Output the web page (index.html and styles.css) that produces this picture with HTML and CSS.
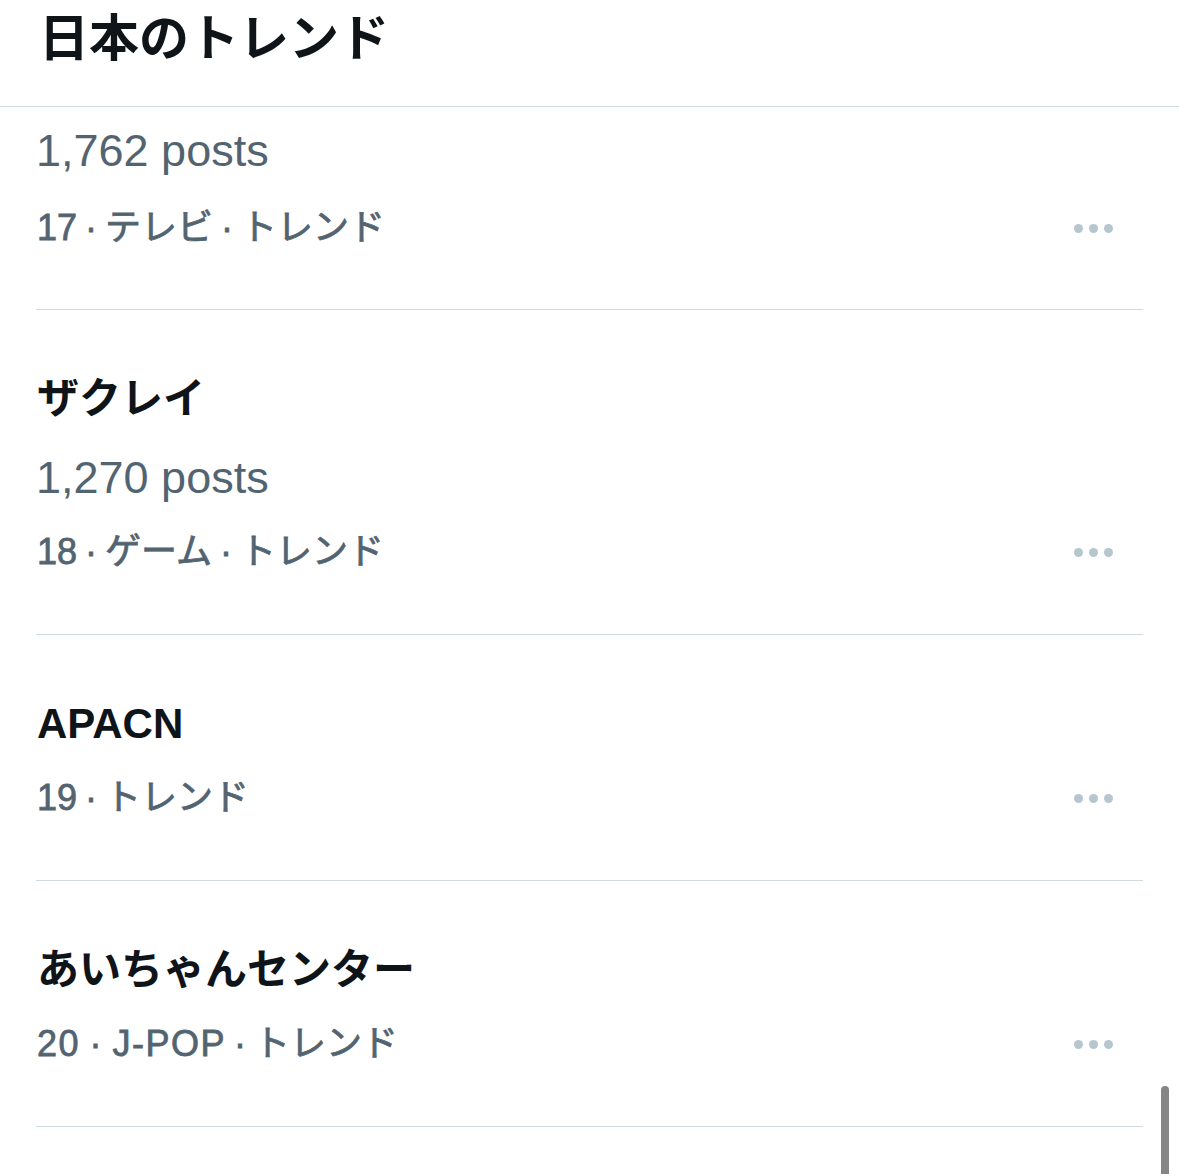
FILE: index.html
```html
<!DOCTYPE html>
<html lang="ja">
<head>
    <meta charset="UTF-8">
    <meta name="viewport" content="width=device-width, initial-scale=1.0">
    <title>日本のトレンド</title>
    <link rel="stylesheet" href="styles.css">
</head>
<body>
    <header class="page-header">
        <h1>日本のトレンド</h1>
    </header>

    <main>
        <ul class="trends">
            <li class="trend trend-cut">
                <div class="trend-posts">1,762 posts</div>
                <div class="trend-meta">
                    <span>17 · テレビ · トレンド</span>
                    <span class="more"><i></i><i></i><i></i></span>
                </div>
            </li>
            <li class="trend">
                <div class="trend-title">ザクレイ</div>
                <div class="trend-posts">1,270 posts</div>
                <div class="trend-meta">
                    <span>18 · ゲーム · トレンド</span>
                    <span class="more"><i></i><i></i><i></i></span>
                </div>
            </li>
            <li class="trend">
                <div class="trend-title">APACN</div>
                <div class="trend-meta">
                    <span>19 · トレンド</span>
                    <span class="more"><i></i><i></i><i></i></span>
                </div>
            </li>
            <li class="trend">
                <div class="trend-title">あいちゃんセンター</div>
                <div class="trend-meta">
                    <span><span class="latin">20 · J-POP</span> · トレンド</span>
                    <span class="more"><i></i><i></i><i></i></span>
                </div>
            </li>
        </ul>
    </main>

    <div class="scrollbar"></div>
</body>
</html>
```

FILE: styles.css
```css
/* base */
body {
    margin: 0;
    background: #fff;
    font-family: "Liberation Sans", "Noto Sans CJK JP", sans-serif;
    color: #0f1419;
    overflow: hidden;
}

/* header */
.page-header {
    height: 107px;
    border-bottom: 1px solid #d4dce0;
    padding: 0 39px;
    box-sizing: border-box;
}

.page-header h1 {
    margin: 0;
    font-size: 50px;
    line-height: 78px;
    font-weight: 700;
}

/* trend list */
.trends {
    list-style: none;
    margin: 0 36px;
    padding: 0;
}

.trend {
    padding: 59px 0 52px;
    border-bottom: 1px solid #cfd9de;
}

.trend-cut {
    padding: 14px 0 51px;
}

.trend-title {
    font-size: 42px;
    line-height: 60px;
    font-weight: 700;
    padding-left: 1px;
}

.trend-posts {
    margin-top: 19px;
    font-size: 45px;
    line-height: 60px;
    color: #536471;
}

.trend-cut .trend-posts {
    margin-top: 0;
}

/* number · category · trend, medium weight faked with a thin stroke */
.trend-meta {
    margin-top: 14px;
    display: flex;
    justify-content: space-between;
    align-items: center;
    font-size: 36px;
    line-height: 60px;
    font-weight: 400;
    -webkit-text-stroke: 0.8px #536471;
    word-spacing: -2px;
    color: #536471;
    padding-left: 1px;
}

.trend-meta .latin {
    letter-spacing: 1.5px;
}

.trend-cut .trend-meta {
    margin-top: 17px;
}

.more {
    display: flex;
    gap: 6px;
    padding-right: 30px;
}

.more i {
    width: 9px;
    height: 9px;
    border-radius: 50%;
    background: #b6c6cf;
}

.scrollbar {
    position: fixed;
    right: 10px;
    bottom: 0;
    width: 8px;
    height: 88px;
    border-radius: 4px 4px 0 0;
    background: #858585;
}
```
